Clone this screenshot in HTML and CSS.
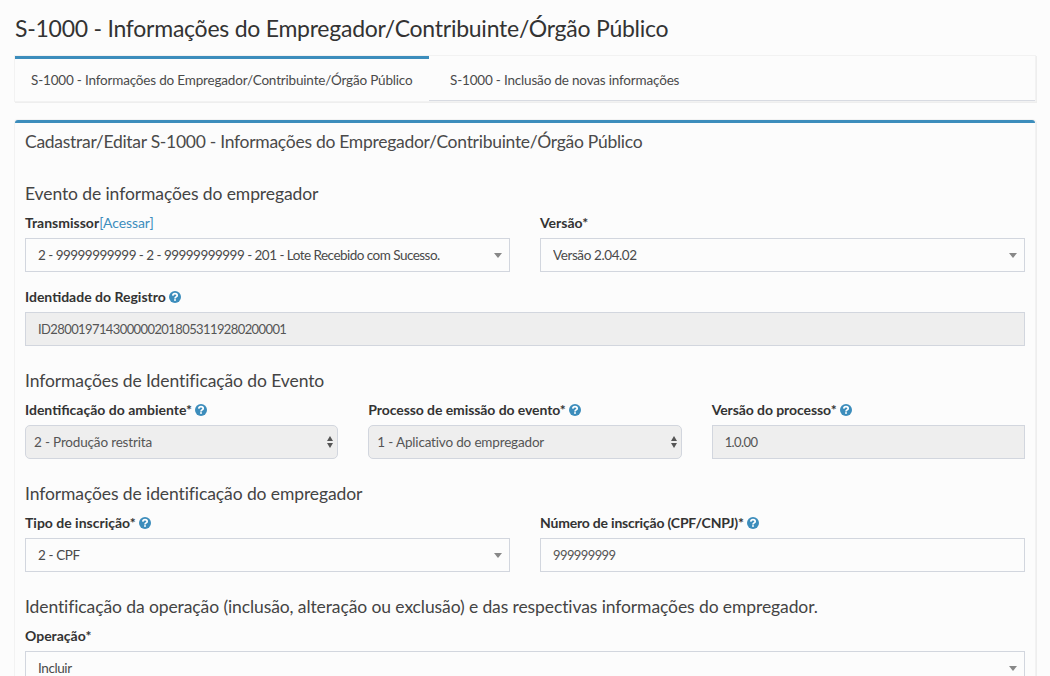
FILE: index.html
```html
<!DOCTYPE html>
<html lang="en">
<head>
  <meta charset="UTF-8" />
  <meta name="viewport" content="width=device-width, initial-scale=1.0"/>
  <title>S-1000</title>
  <link rel="stylesheet" href="styles.css">
</head>
<body>
  <svg class="defs" width="0" height="0">
    <symbol id="help" viewBox="0 0 12 12">
      <circle cx="6" cy="6" r="6" fill="#3c8dbc"/>
      <path d="M3.800 4.600C3.900 3.300 4.900 2.600 6 2.600c1.300 0 2.200.8 2.200 1.800 0 1.500-2.200 1.500-2.200 3" fill="none" stroke="#fff" stroke-width="1.700"/>
      <rect x="5.100" y="8.200" width="1.800" height="1.600" fill="#fff"/>
    </symbol>
  </svg>

  <h1 class="page-title">S-1000 - Informações do Empregador/Contribuinte/Órgão Público</h1>

  <div class="tabs">
    <a class="tab active">S-1000 - Informações do Empregador/Contribuinte/Órgão Público</a>
    <a class="tab">S-1000 - Inclusão de novas informações</a>
  </div>

  <div class="box">
    <h3 class="box-title">Cadastrar/Editar S-1000 - Informações do Empregador/Contribuinte/Órgão Público</h3>

    <h4 class="section first">Evento de informações do empregador</h4>
    <div class="row">
      <div class="field">
        <label>Transmissor<a class="link">[Acessar]</a></label>
        <div class="combo"><select class="digits"><option>2 - 99999999999 - 2 - 99999999999 - 201 - Lote Recebido com Sucesso.</option></select></div>
      </div>
      <div class="field">
        <label>Versão*</label>
        <div class="combo"><select><option>Versão 2.04.02</option></select></div>
      </div>
    </div>
    <div class="row">
      <div class="field">
        <label>Identidade do Registro <svg class="help"><use href="#help"/></svg></label>
        <input class="text" disabled value="ID2800197143000002018053119280200001">
      </div>
    </div>

    <h4 class="section">Informações de Identificação do Evento</h4>
    <div class="row">
      <div class="field">
        <label>Identificação do ambiente* <svg class="help"><use href="#help"/></svg></label>
        <div class="native"><select disabled><option>2 - Produção restrita</option></select></div>
      </div>
      <div class="field">
        <label class="tight">Processo de emissão do evento* <svg class="help"><use href="#help"/></svg></label>
        <div class="native"><select disabled><option>1 - Aplicativo do empregador</option></select></div>
      </div>
      <div class="field">
        <label class="tight">Versão do processo* <svg class="help"><use href="#help"/></svg></label>
        <input class="text" disabled value="1.0.00">
      </div>
    </div>

    <h4 class="section">Informações de identificação do empregador</h4>
    <div class="row">
      <div class="field">
        <label>Tipo de inscrição* <svg class="help"><use href="#help"/></svg></label>
        <div class="combo"><select><option>2 - CPF</option></select></div>
      </div>
      <div class="field">
        <label class="tighter">Número de inscrição (CPF/CNPJ)* <svg class="help"><use href="#help"/></svg></label>
        <input class="text" value="999999999">
      </div>
    </div>

    <h4 class="section">Identificação da operação (inclusão, alteração ou exclusão) e das respectivas informações do empregador.</h4>
    <div class="row">
      <div class="field">
        <label>Operação*</label>
        <div class="combo"><select><option>Incluir</option></select></div>
      </div>
    </div>
  </div>
</body>
</html>
```

FILE: styles.css
```css
html {
  overflow: hidden;
}
body {
  margin: 0;
  padding: 0 15px;
  background: #fcfcfc;
  color: #333;
  font-family: 'Lato', 'Noto Sans', sans-serif;
  font-size: 14px;
}
.defs {
  position: absolute;
}
.page-title {
  margin: 0;
  padding-top: 14px;
  height: 42px;
  font-size: 23px;
  letter-spacing: -0.25px;
  line-height: 28px;
  font-weight: 400;
  color: #333;
}
.tabs {
  display: flex;
  height: 45px;
  box-sizing: border-box;
  background: #fcfcfc;
  border-bottom: 1px solid #d8dbe2;
  box-shadow: 0 0 0 1px #f2f2f2, 1px 1px 0 1px #eee;
}
.tab {
  padding: 0 16px 0 21px;
  line-height: 49px;
  font-size: 13.5px;
  letter-spacing: -0.18px;
  color: #4a4a4a;
  white-space: nowrap;
}
.tab.active {
  width: 414px;
  box-sizing: border-box;
  padding-left: 16px;
  height: 45px;
  line-height: 43px;
  background: #fcfcfc;
  border-top: 3px solid #3c8dbc;
}
.box {
  margin-top: 19px;
  padding: 0 10px;
  height: 600px;
  background: #fcfcfc;
  border-top: 3px solid #3c8dbc;
  border-radius: 3px;
  box-sizing: border-box;
  box-shadow: 0 0 0 1px #f2f2f2, 1px 1px 0 1px #eee;
}
.box-title {
  margin: 0;
  padding-top: 9px;
  height: 61px;
  box-sizing: border-box;
  font-size: 17.5px;
  letter-spacing: -0.28px;
  line-height: 20px;
  font-weight: 400;
  color: #4a4a4a;
}
.section {
  margin: 10px 0 9px;
  font-size: 17.5px;
  letter-spacing: -0.1px;
  line-height: 20px;
  font-weight: 400;
  color: #444;
}
.section.first {
  margin-top: 0;
}
.row {
  display: flex;
  gap: 30px;
}
.field {
  flex: 1;
  min-width: 0;
  margin-bottom: 15px;
}
label {
  display: block;
  height: 20px;
  line-height: 20px;
  margin-bottom: 5px;
  font-weight: 700;
  color: #333;
}
label.tight {
  letter-spacing: -0.08px;
}
label.tighter {
  letter-spacing: -0.2px;
}
.link {
  font-weight: 400;
  letter-spacing: -0.1px;
  color: #3c8dbc;
}
.help {
  width: 12px;
  height: 12px;
  vertical-align: -1px;
}
select,
.text {
  display: block;
  width: 100%;
  height: 34px;
  box-sizing: border-box;
  margin: 0;
  border: 1px solid #d2d6de;
  border-radius: 0;
  background: #fcfcfc;
  font-family: inherit;
  font-size: 13.5px;
  letter-spacing: -0.4px;
  color: #4a4a4a;
  appearance: none;
  outline: none;
}
select.digits {
  letter-spacing: -0.53px;
}
.text {
  padding: 0 12px;
  font-size: 13px;
  letter-spacing: -0.6px;
  color: #555;
}
.text:disabled {
  background: #eee;
  color: #555;
  opacity: 1;
}
.combo,
.native {
  position: relative;
}
.combo select {
  padding: 0 30px 0 12px;
}
.combo::after {
  content: "";
  position: absolute;
  top: 15px;
  right: 8px;
  border-style: solid;
  border-width: 5px 4px 0;
  border-color: #888 transparent transparent;
}
.native select {
  padding: 0 24px 0 8px;
  border-radius: 5px;
  background: #eee;
  letter-spacing: -0.17px;
  color: #555;
  opacity: 1;
}
.native::before,
.native::after {
  content: "";
  position: absolute;
  right: 5px;
  border-style: solid;
  border-color: transparent;
}
.native::before {
  top: 11px;
  border-width: 0 3px 5px;
  border-bottom-color: #555;
}
.native::after {
  top: 18px;
  border-width: 5px 3px 0;
  border-top-color: #555;
}
```
